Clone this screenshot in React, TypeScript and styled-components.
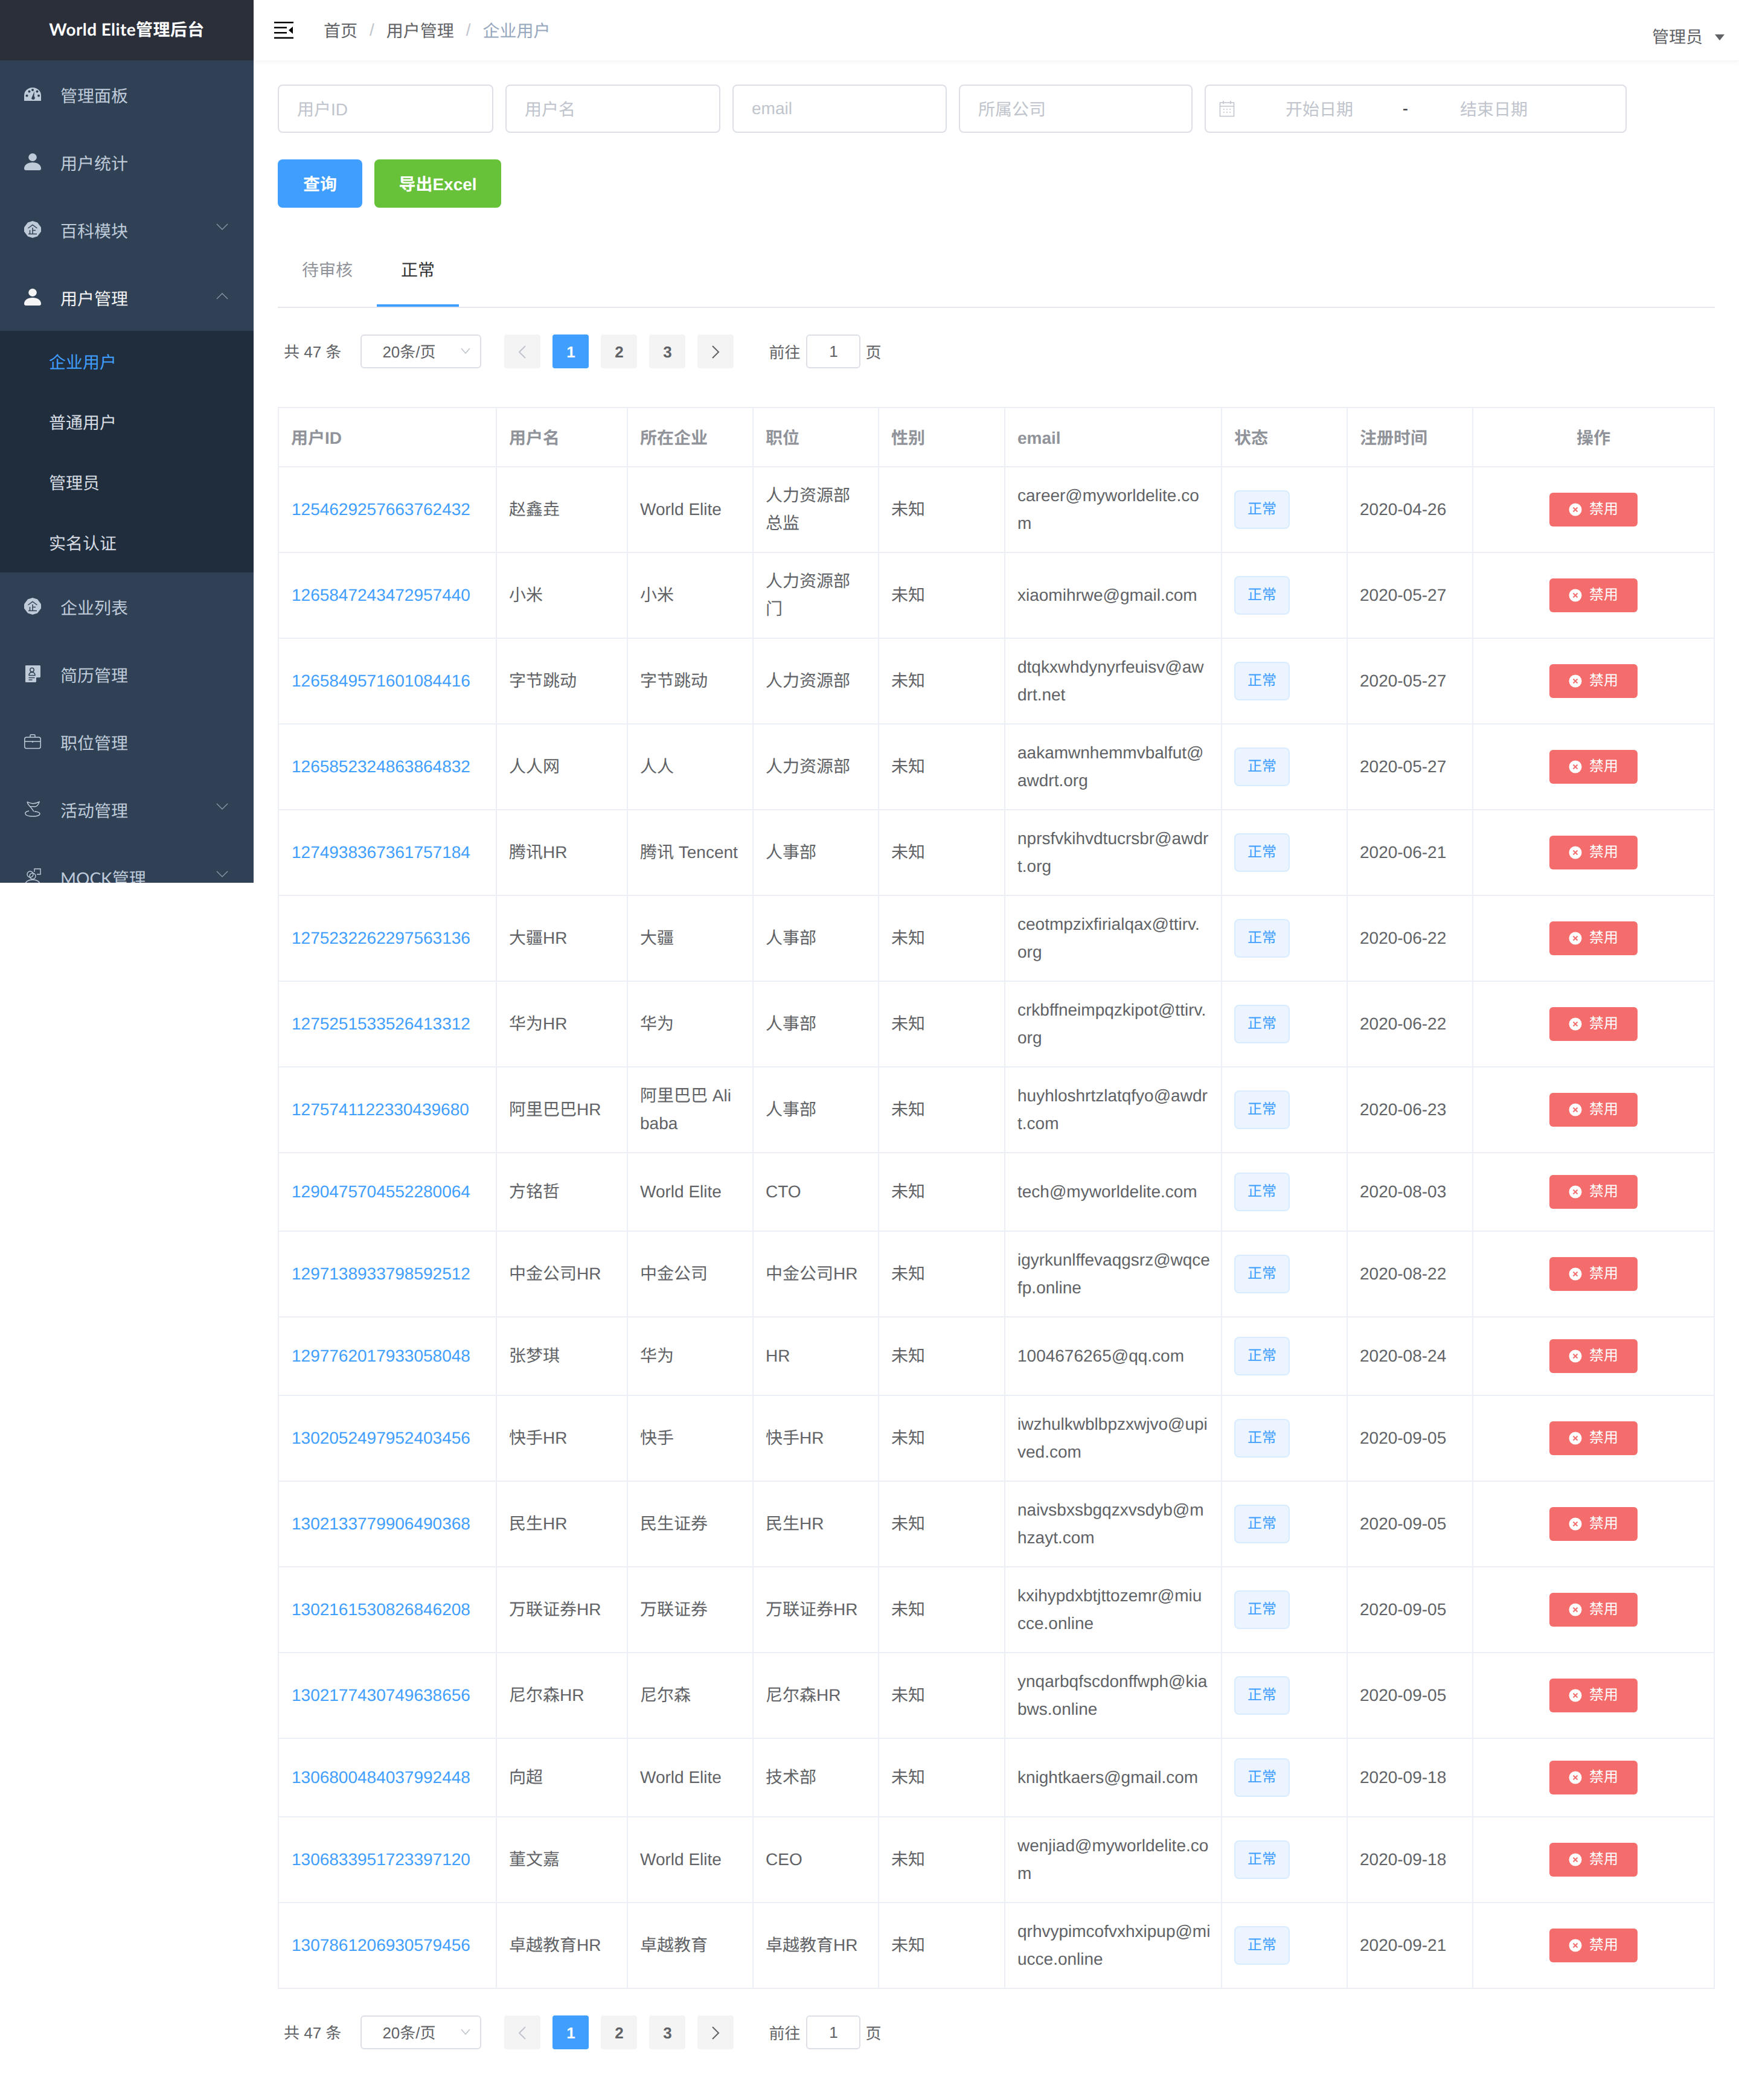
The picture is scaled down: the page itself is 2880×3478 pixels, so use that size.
import styled, { createGlobalStyle } from 'styled-components'

const CJK = '"Noto Sans CJK SC", sans-serif'

const GlobalStyle = createGlobalStyle`
    * {
        box-sizing: border-box;
    }
    body {
        margin: 0;
        background: #fff;
        font-family: "Liberation Sans", ${CJK};
        color: #606266;
        text-rendering: geometricPrecision;
    }
`

const Layout = styled.div`
    display: flex;
    align-items: flex-start;
    width: 2880px;
`

const Sidebar = styled.aside`
    width: 420px;
    height: 1462px;
    flex-shrink: 0;
    overflow: hidden;
    background: #304156;
    font-family: Lato, ${CJK};
`

const Logo = styled.div`
    height: 100px;
    background: #2b2f3a;
    color: #fff;
    font-size: 28px;
    font-weight: 700;
    letter-spacing: 0.4px;
    display: flex;
    align-items: center;
    justify-content: center;
    padding-bottom: 4px;
`

const MenuItem = styled.div<{ $open?: boolean }>`
    height: 112px;
    display: flex;
    align-items: center;
    padding: 0 42px 0 40px;
    font-size: 28px;
    color: ${({ $open }) => ($open ? '#f4f4f5' : '#bfcbd9')};
`

const MenuIcon = styled.svg`
    width: 28px;
    height: 28px;
    flex-shrink: 0;
    margin-right: 32px;
`

const MenuTitle = styled.span`
    flex: 1;
    position: relative;
    top: 2px;
`

const Arrow = styled.svg<{ $up?: boolean }>`
    width: 20px;
    height: 12px;
    margin-top: ${({ $up }) => ($up ? -4 : -8)}px;
    fill: none;
    stroke: #8b96a5;
    stroke-width: 1.4;
`

const SubMenu = styled.div`
    background: #1f2d3d;
`

const SubItem = styled.div<{ $active?: boolean }>`
    height: 100px;
    display: flex;
    align-items: center;
    padding: 2px 0 0 81px;
    font-size: 28px;
    color: ${({ $active }) => ($active ? '#409eff' : '#d7dce3')};
`

const Main = styled.main`
    flex: 1;
    min-width: 0;
`

const Navbar = styled.header`
    height: 100px;
    display: flex;
    align-items: center;
    padding-left: 34px;
    box-shadow: 0 2px 8px rgba(0, 21, 41, 0.06);
`

const Hamburger = styled.svg`
    width: 32px;
    height: 28px;
    margin-right: 50px;
`

const Crumbs = styled.nav`
    display: flex;
    align-items: center;
    font-size: 28px;
    flex: 1;
`

const Crumb = styled.span<{ $last?: boolean }>`
    color: ${({ $last }) => ($last ? '#97a8be' : '#606266')};
`

const CrumbSep = styled.span`
    color: #c0c4cc;
    margin: 0 20px;
    font-family: "Liberation Sans", sans-serif;
`

const UserMenu = styled.div`
    display: flex;
    align-items: center;
    font-size: 28px;
    padding: 20px 24px 0 0;
    gap: 20px;
`

const Caret = styled.span`
    width: 0;
    height: 0;
    border-left: 8px solid transparent;
    border-right: 8px solid transparent;
    border-top: 10px solid #606266;
    margin-top: 4px;
`

const Content = styled.div`
    padding: 40px;
`

const FilterRow = styled.div`
    display: flex;
    gap: 20px;
    margin-bottom: 44px;
`

const Field = styled.div<{ $width: number }>`
    width: ${({ $width }) => $width}px;
    height: 80px;
    border: 2px solid #dcdfe6;
    border-radius: 8px;
    display: flex;
    align-items: center;
    padding: 0 30px;
    font-size: 28px;
    color: #c0c4cc;
`

const DateField = styled(Field)`
    padding: 0 0 0 22px;
`

const DateIcon = styled.svg`
    width: 26px;
    height: 28px;
    flex-shrink: 0;
    margin-right: 16px;
`

const DateText = styled.span`
    width: 248px;
    text-align: center;
`

const DateSep = styled.span`
    color: #303133;
    width: 41px;
    padding-right: 4px;
    text-align: center;
`

const ButtonRow = styled.div`
    display: flex;
    gap: 20px;
`

const Button = styled.div<{ $color: string; $width: number }>`
    width: ${({ $width }) => $width}px;
    height: 80px;
    border-radius: 8px;
    background: ${({ $color }) => $color};
    color: #fff;
    font-size: 28px;
    font-weight: 700;
    display: flex;
    align-items: center;
    justify-content: center;
`

const Tabs = styled.div`
    display: flex;
    margin-top: 44px;
    border-bottom: 2px solid #e4e7ed;
`

const Tab = styled.div<{ $active?: boolean }>`
    height: 120px;
    padding: 0 40px;
    display: flex;
    align-items: center;
    font-size: 28px;
    color: ${({ $active }) => ($active ? '#303133' : '#909399')};
    border-bottom: 4px solid ${({ $active }) => ($active ? '#409eff' : 'transparent')};
`

const PagerBar = styled.div<{ $top: number }>`
    display: flex;
    align-items: center;
    height: 56px;
    margin-top: ${({ $top }) => $top}px;
    padding-left: 10px;
    font-size: 26px;
`

const Total = styled.span`
    margin: -2px 32px 0 0;
    white-space: nowrap;
`

const PageSize = styled.div`
    width: 200px;
    height: 56px;
    border: 2px solid #dcdfe6;
    border-radius: 6px;
    display: flex;
    align-items: center;
    justify-content: space-between;
    padding: 0 16px 2px 34px;
    margin-right: 38px;
`

const SelectArrow = styled.svg`
    width: 16px;
    height: 10px;
    fill: none;
    stroke: #c0c4cc;
    stroke-width: 1.6;
`

const PageBtn = styled.div<{ $active?: boolean }>`
    width: 60px;
    height: 56px;
    margin-right: 20px;
    padding-top: 2px;
    border-radius: 4px;
    background: ${({ $active }) => ($active ? '#409eff' : '#f4f4f5')};
    color: ${({ $active }) => ($active ? '#fff' : '#606266')};
    font-weight: 700;
    display: flex;
    align-items: center;
    justify-content: center;
`

const PageArrow = styled.svg<{ $disabled?: boolean }>`
    width: 14px;
    height: 22px;
    fill: none;
    stroke: ${({ $disabled }) => ($disabled ? '#c0c4cc' : '#606266')};
    stroke-width: 2;
`

const JumpLabel = styled.span`
    margin-left: 38px;
    margin-right: 10px;
`

const JumpInput = styled.div`
    width: 90px;
    height: 56px;
    border: 2px solid #dcdfe6;
    border-radius: 6px;
    display: flex;
    align-items: center;
    justify-content: center;
    margin-right: 8px;
`

const Table = styled.table`
    width: 2380px;
    table-layout: fixed;
    border-collapse: separate;
    border-spacing: 0;
    border-top: 2px solid #ebeef5;
    border-left: 2px solid #ebeef5;
    margin-top: 64px;
    font-size: 28px;
`

const Col = styled.col<{ $width: number }>`
    width: ${({ $width }) => $width}px;
`

const Th = styled.th<{ $center?: boolean }>`
    padding: 27px 20px 23px;
    line-height: 46px;
    font-weight: 700;
    color: #909399;
    text-align: ${({ $center }) => ($center ? 'center' : 'left')};
    border-right: 2px solid #ebeef5;
    border-bottom: 2px solid #ebeef5;
`

const Td = styled.td<{ $center?: boolean }>`
    height: 130px;
    padding: 24px 20px;
    line-height: 46px;
    color: #606266;
    word-break: break-all;
    vertical-align: middle;
    text-align: ${({ $center }) => ($center ? 'center' : 'left')};
    border-right: 2px solid #ebeef5;
    border-bottom: 2px solid #ebeef5;
`

const EmailCell = styled(Td)<{ $tight?: boolean }>`
    padding-right: ${({ $tight }) => ($tight ? 16 : 20)}px;
`

const IdLink = styled.a`
    margin-left: 1px;
    color: #409eff;
    text-decoration: none;
`

const StatusTag = styled.span`
    display: inline-flex;
    align-items: center;
    justify-content: center;
    vertical-align: middle;
    width: 92px;
    height: 64px;
    font-size: 24px;
    color: #409eff;
    background: #ecf5ff;
    border: 2px solid #d9ecff;
    border-radius: 8px;
`

const DisableButton = styled.span`
    display: inline-flex;
    align-items: center;
    justify-content: center;
    vertical-align: middle;
    gap: 12px;
    width: 146px;
    height: 56px;
    font-size: 24px;
    color: #fff;
    background: #f56c6c;
    border-radius: 6px;
`

const CloseIcon = styled.svg`
    width: 22px;
    height: 22px;
`

const rows = [
    ['1254629257663762432', '赵鑫垚', 'World Elite', '人力资源部总监', 'career@myworldelite.com', '2020-04-26'],
    ['1265847243472957440', '小米', '小米', '人力资源部门', 'xiaomihrwe@gmail.com', '2020-05-27'],
    ['1265849571601084416', '字节跳动', '字节跳动', '人力资源部', 'dtqkxwhdynyrfeuisv@awdrt.net', '2020-05-27'],
    ['1265852324863864832', '人人网', '人人', '人力资源部', 'aakamwnhemmvbalfut@awdrt.org', '2020-05-27'],
    ['1274938367361757184', '腾讯HR', '腾讯 Tencent', '人事部', 'nprsfvkihvdtucrsbr@awdrt.org', '2020-06-21'],
    ['1275232262297563136', '大疆HR', '大疆', '人事部', 'ceotmpzixfirialqax@ttirv.org', '2020-06-22'],
    ['1275251533526413312', '华为HR', '华为', '人事部', 'crkbffneimpqzkipot@ttirv.org', '2020-06-22'],
    ['1275741122330439680', '阿里巴巴HR', '阿里巴巴 Ali baba', '人事部', 'huyhloshrtzlatqfyo@awdrt.com', '2020-06-23'],
    ['1290475704552280064', '方铭哲', 'World Elite', 'CTO', 'tech@myworldelite.com', '2020-08-03'],
    ['1297138933798592512', '中金公司HR', '中金公司', '中金公司HR', 'igyrkunlffevaqgsrz@wqcefp.online', '2020-08-22'],
    ['1297762017933058048', '张梦琪', '华为', 'HR', '1004676265@qq.com', '2020-08-24'],
    ['1302052497952403456', '快手HR', '快手', '快手HR', 'iwzhulkwblbpzxwjvo@upived.com', '2020-09-05'],
    ['1302133779906490368', '民生HR', '民生证券', '民生HR', 'naivsbxsbgqzxvsdyb@mhzayt.com', '2020-09-05'],
    ['1302161530826846208', '万联证券HR', '万联证券', '万联证券HR', 'kxihypdxbtjttozemr@miucce.online', '2020-09-05'],
    ['1302177430749638656', '尼尔森HR', '尼尔森', '尼尔森HR', 'ynqarbqfscdonffwph@kiabws.online', '2020-09-05'],
    ['1306800484037992448', '向超', 'World Elite', '技术部', 'knightkaers@gmail.com', '2020-09-18'],
    ['1306833951723397120', '董文嘉', 'World Elite', 'CEO', 'wenjiad@myworldelite.com', '2020-09-18'],
    ['1307861206930579456', '卓越教育HR', '卓越教育', '卓越教育HR', 'qrhvypimcofvxhxipup@miucce.online', '2020-09-21'],
]

// these two wrap a letter later in the reference
const tightEmails = ['igyrkunlffevaqgsrz@wqcefp.online', 'qrhvypimcofvxhxipup@miucce.online']

const colWidths = [361, 217, 208, 208, 209, 359, 208, 208, 400]
const headers = ['用户ID', '用户名', '所在企业', '职位', '性别', 'email', '状态', '注册时间']

const iconColor = '#bfcbd9'
const bg = '#304156'

const GaugeIcon = () => (
    <MenuIcon viewBox="0 0 28 28">
        <g transform="translate(0 0.5)">
            <path d="M0 24.5V15.5a14 13 0 0 1 28 0v9z" fill={iconColor} transform="translate(0 0)" />
            <circle cx="4.5" cy="16" r="2" fill={bg} />
            <circle cx="8.5" cy="9" r="2" fill={bg} />
            <circle cx="14" cy="6.5" r="2" fill={bg} />
            <circle cx="21.5" cy="9" r="2" fill={bg} />
            <circle cx="24" cy="16" r="2" fill={bg} />
            <path d="M17 8.5L16.5 17a3 3 0 1 1-4.5 3.4z" fill={bg} />
        </g>
    </MenuIcon>
)

const PersonIcon = ({ color = iconColor }: { color?: string }) => (
    <MenuIcon viewBox="0 0 28 28">
        <ellipse cx="14" cy="6.5" rx="6.8" ry="6.5" fill={color} />
        <path d="M0 25c0-6 6-10 14-10s14 4 14 10c0 2-1 3-3 3H3c-2 0-3-1-3-3z" fill={color} />
    </MenuIcon>
)

const BadgeIcon = () => (
    <MenuIcon viewBox="0 0 28 28">
        <path d="M14 0l8 2.6 6 8v6.8l-6 8-8 2.6-8-2.6-6-8v-6.8l6-8z" fill={iconColor} />
        <path
            d="M6.5 12L14 6.5 21.5 12M7 21.5h14M14 11v10.5M14 15.5h5M9.5 15v6.5"
            fill="none"
            stroke={bg}
            strokeWidth="1.5"
        />
    </MenuIcon>
)

const ResumeIcon = () => (
    <MenuIcon viewBox="0 0 28 28">
        <path d="M3 0h23a1 1 0 0 1 1 1v18l-8 9H3a1 1 0 0 1-1-1V1a1 1 0 0 1 1-1z" fill={iconColor} />
        <circle cx="13" cy="7.5" r="3.2" fill="none" stroke={bg} strokeWidth="1.5" />
        <path d="M8 16.5c0-3.5 2-5 5-5s5 1.5 5 5zM7.5 20.5h10M7.5 24h6" fill="none" stroke={bg} strokeWidth="1.5" />
        <path d="M26.5 20h-5.5a1 1 0 0 0-1 1v6.5z" fill={bg} />
    </MenuIcon>
)

const BagIcon = () => (
    <MenuIcon viewBox="0 0 28 28">
        <rect x="0.8" y="7" width="26.4" height="18.5" rx="3" fill="none" stroke={iconColor} strokeWidth="1.5" />
        <path d="M10 7V4.2a1.5 1.5 0 0 1 1.5-1.5h5A1.5 1.5 0 0 1 18 4.2V7M1 14h26M14 13v3" fill="none" stroke={iconColor} strokeWidth="1.5" />
    </MenuIcon>
)

const FlagIcon = () => (
    <MenuIcon viewBox="0 0 28 28">
        <path
            d="M5 2c5 2 10 5 20 0-1 4-4 8-7 8-3 0-6-1-9 0M5 2c1 5 3 6 5 8s4 5 6 8M8 17c-5 1-7 3-6 5 1 3 7 4 13 4 7 0 11-2 11-4 0-3-6-4-9-4"
            fill="none"
            stroke={iconColor}
            strokeWidth="1.4"
        />
    </MenuIcon>
)

const PeopleIcon = () => (
    <MenuIcon viewBox="0 0 28 28">
        <circle cx="10" cy="10" r="5" fill="none" stroke={iconColor} strokeWidth="1.4" />
        <circle cx="14" cy="13" r="5" fill="none" stroke={iconColor} strokeWidth="1.4" />
        <path d="M2 27c0-5 5-8 12-8s12 3 12 8M17 6V1h10v9h-6" fill="none" stroke={iconColor} strokeWidth="1.4" />
    </MenuIcon>
)

const ArrowIcon = ({ up }: { up?: boolean }) => (
    <Arrow $up={up} viewBox="0 0 20 12">
        <polyline points={up ? '1,11 10,2 19,11' : '1,1 10,10 19,1'} />
    </Arrow>
)

const Pager = ({ top }: { top: number }) => (
    <PagerBar $top={top}>
        <Total>共 47 条</Total>
        <PageSize>
            <span>20条/页</span>
            <SelectArrow viewBox="0 0 16 10">
                <polyline points="1,1 8,9 15,1" />
            </SelectArrow>
        </PageSize>
        <PageBtn>
            <PageArrow $disabled viewBox="0 0 14 22">
                <polyline points="12,1 2,11 12,21" />
            </PageArrow>
        </PageBtn>
        <PageBtn $active>1</PageBtn>
        <PageBtn>2</PageBtn>
        <PageBtn>3</PageBtn>
        <PageBtn>
            <PageArrow viewBox="0 0 14 22">
                <polyline points="2,1 12,11 2,21" />
            </PageArrow>
        </PageBtn>
        <JumpLabel>前往</JumpLabel>
        <JumpInput>1</JumpInput>
        <span>页</span>
    </PagerBar>
)

export default function App() {
    return (
        <>
            <GlobalStyle />
            <Layout>
                <Sidebar>
                    <Logo>World Elite管理后台</Logo>
                    <MenuItem>
                        <GaugeIcon />
                        <MenuTitle>管理面板</MenuTitle>
                    </MenuItem>
                    <MenuItem>
                        <PersonIcon />
                        <MenuTitle>用户统计</MenuTitle>
                    </MenuItem>
                    <MenuItem>
                        <BadgeIcon />
                        <MenuTitle>百科模块</MenuTitle>
                        <ArrowIcon />
                    </MenuItem>
                    <MenuItem $open>
                        <PersonIcon color="#f4f4f5" />
                        <MenuTitle>用户管理</MenuTitle>
                        <ArrowIcon up />
                    </MenuItem>
                    <SubMenu>
                        <SubItem $active>企业用户</SubItem>
                        <SubItem>普通用户</SubItem>
                        <SubItem>管理员</SubItem>
                        <SubItem>实名认证</SubItem>
                    </SubMenu>
                    <MenuItem>
                        <BadgeIcon />
                        <MenuTitle>企业列表</MenuTitle>
                    </MenuItem>
                    <MenuItem>
                        <ResumeIcon />
                        <MenuTitle>简历管理</MenuTitle>
                    </MenuItem>
                    <MenuItem>
                        <BagIcon />
                        <MenuTitle>职位管理</MenuTitle>
                    </MenuItem>
                    <MenuItem>
                        <FlagIcon />
                        <MenuTitle>活动管理</MenuTitle>
                        <ArrowIcon />
                    </MenuItem>
                    <MenuItem>
                        <PeopleIcon />
                        <MenuTitle>MOCK管理</MenuTitle>
                        <ArrowIcon />
                    </MenuItem>
                </Sidebar>
                <Main>
                    <Navbar>
                        <Hamburger viewBox="0 0 32 28">
                            <path d="M0 0h32v2.5H0zM0 8.5h21v2.5H0zM0 17h21v2.5H0zM0 25.5h32V28H0zM31 8v12l-7-6z" fill="#000" />
                        </Hamburger>
                        <Crumbs>
                            <Crumb>首页</Crumb>
                            <CrumbSep>/</CrumbSep>
                            <Crumb>用户管理</Crumb>
                            <CrumbSep>/</CrumbSep>
                            <Crumb $last>企业用户</Crumb>
                        </Crumbs>
                        <UserMenu>
                            管理员
                            <Caret />
                        </UserMenu>
                    </Navbar>
                    <Content>
                        <FilterRow>
                            <Field $width={357}>用户ID</Field>
                            <Field $width={356}>用户名</Field>
                            <Field $width={355}>email</Field>
                            <Field $width={387}>所属公司</Field>
                            <DateField $width={699}>
                                <DateIcon viewBox="0 0 26 28">
                                    <path
                                        d="M1.5 4h23v22.5h-23zM1.5 10h23M7 1v5M19 1v5M7 15h2M12 15h2M17 15h2M7 20h2M12 20h2M17 20h2"
                                        fill="none"
                                        stroke="#c0c4cc"
                                        strokeWidth="1.6"
                                    />
                                </DateIcon>
                                <DateText>开始日期</DateText>
                                <DateSep>-</DateSep>
                                <DateText>结束日期</DateText>
                            </DateField>
                        </FilterRow>
                        <ButtonRow>
                            <Button $color="#409eff" $width={140}>查询</Button>
                            <Button $color="#67c23a" $width={210}>导出Excel</Button>
                        </ButtonRow>
                        <Tabs>
                            <Tab>待审核</Tab>
                            <Tab $active>正常</Tab>
                        </Tabs>
                        <Pager top={44} />
                        <Table>
                            <colgroup>
                                {colWidths.map((width, index) => (
                                    <Col key={index} $width={width} />
                                ))}
                            </colgroup>
                            <thead>
                                <tr>
                                    {headers.map((title) => (
                                        <Th key={title}>{title}</Th>
                                    ))}
                                    <Th $center>操作</Th>
                                </tr>
                            </thead>
                            <tbody>
                                {rows.map(([id, name, company, position, email, date]) => (
                                    <tr key={id}>
                                        <Td>
                                            <IdLink>{id}</IdLink>
                                        </Td>
                                        <Td>{name}</Td>
                                        <Td>{company}</Td>
                                        <Td>{position}</Td>
                                        <Td>未知</Td>
                                        <EmailCell $tight={tightEmails.includes(email)}>{email}</EmailCell>
                                        <Td>
                                            <StatusTag>正常</StatusTag>
                                        </Td>
                                        <Td>{date}</Td>
                                        <Td $center>
                                            <DisableButton>
                                                <CloseIcon viewBox="0 0 22 22">
                                                    <circle cx="11" cy="11" r="10.5" fill="#fff" />
                                                    <path d="M7.5 7.5l7 7M14.5 7.5l-7 7" stroke="#f56c6c" strokeWidth="2" />
                                                </CloseIcon>
                                                禁用
                                            </DisableButton>
                                        </Td>
                                    </tr>
                                ))}
                            </tbody>
                        </Table>
                        <Pager top={44} />
                    </Content>
                </Main>
            </Layout>
        </>
    )
}
